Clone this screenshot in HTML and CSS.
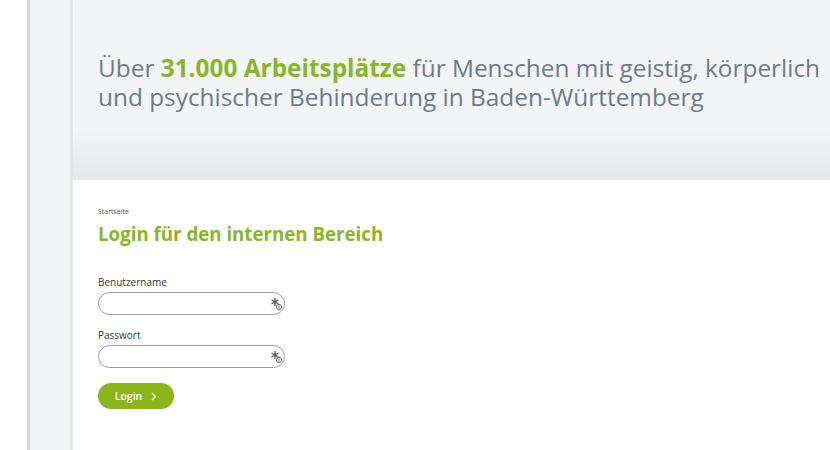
FILE: index.html
```html
<!DOCTYPE html>
<html lang="de">
<head>
<meta charset="utf-8">
<link rel="stylesheet" href="styles.css">
</head>
<body>
<div class="page">
  <div class="edge"></div>
  <div class="rail"></div>
  <div class="main">
    <header class="hero">
      <p class="claim">Über <strong>31.000 Arbeitsplätze</strong> für Menschen mit geistig, körperlich<br>und psychischer Behinderung in Baden-Württemberg</p>
    </header>
    <section class="content">
      <div class="crumb">Startseite</div>
      <h1 class="title">Login für den internen Bereich</h1>
      <form class="form">
        <label class="label">Benutzername</label>
        <div class="field">
          <span class="key"><svg width="12" height="14" viewBox="0 0 12 14"><g stroke="#555" stroke-width="1.3" fill="none"><path d="M4 1v8M0.5 3l7 4M7.5 3l-7 4"/></g><circle cx="8" cy="10" r="2.6" fill="#fff" stroke="#666" stroke-width="1"/><path d="M8 8.5v3" stroke="#666" stroke-width="1"/></svg></span>
        </div>
        <label class="label">Passwort</label>
        <div class="field">
          <span class="key"><svg width="12" height="14" viewBox="0 0 12 14"><g stroke="#555" stroke-width="1.3" fill="none"><path d="M4 1v8M0.5 3l7 4M7.5 3l-7 4"/></g><circle cx="8" cy="10" r="2.6" fill="#fff" stroke="#666" stroke-width="1"/><path d="M8 8.5v3" stroke="#666" stroke-width="1"/></svg></span>
        </div>
        <button type="button" class="btn">Login <svg class="chev" width="6" height="9" viewBox="0 0 6 9"><path d="M1 1l3.5 3.5L1 8" fill="none" stroke="#fff" stroke-width="1.2"/></svg></button>
      </form>
    </section>
  </div>
</div>
</body>
</html>
```
FILE: styles.css
```css
html, body { margin: 0; padding: 0; }
body { font-family: "Open Sans", "Noto Sans", sans-serif; background: #fff; }
.page { display: flex; width: 830px; height: 450px; overflow: hidden; }
.edge { width: 27px; background: #fff; border-right: 3px solid #d2d3d5; flex: none; }
.rail { width: 40px; background: #f3f4f6; flex: none; border-right: 3px solid #e4e5e7; }
.main { flex: 1; display: flex; flex-direction: column; min-width: 0; }
.hero {
  height: 180px; box-sizing: border-box;
  background: linear-gradient(#f3f4f6 0, #f3f4f6 130px, #e6e7e9 180px);
  padding: 53px 0 0 25px;
}
.claim { margin: 0; font-size: 24.4px; line-height: 29px; color: #6d7b8c; white-space: nowrap; }
.claim strong { color: #8ab52b; font-weight: 700; }
.content { padding: 27px 0 0 25px; }
.crumb { font-size: 7px; color: #555; line-height: 10px; }
.title { margin: 5px 0 0; font-size: 18.7px; font-weight: 700; color: #8ab52b; line-height: 24px; }
.form { display: flex; flex-direction: column; align-items: flex-start; margin-top: 29px; }
.label { font-size: 10px; color: #333; line-height: 14px; margin-bottom: 3px; }
.field {
  width: 187px; height: 23px; box-sizing: border-box;
  border: 1px solid #9a9a9a; border-radius: 12px; background: #fff;
  display: flex; justify-content: flex-end; align-items: center; padding-right: 1px;
  margin-bottom: 13px;
}
.key { display: flex; }
.btn {
  margin-top: 2px; width: 76px; height: 26px; border: 0; border-radius: 13px;
  background: #8cb51c; color: #fff; font-family: "Open Sans", sans-serif;
  font-size: 10.5px; font-weight: 600; display: flex; align-items: center; justify-content: center; gap: 9px; padding: 0;
}
.chev { display: block; }
```
